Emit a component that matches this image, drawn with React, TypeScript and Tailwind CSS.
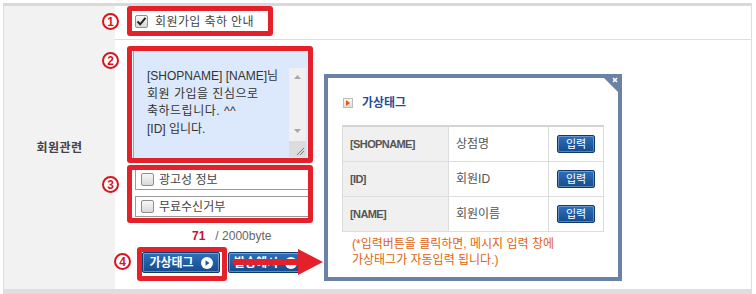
import React from "react";

function CheckBox({ checked }: { checked?: boolean }) {
  return (
    <span className="relative inline-flex w-[13px] h-[13px] shrink-0 items-center justify-center rounded-[2px] border border-[#8f8f8f] bg-gradient-to-b from-[#f7f7f7] to-[#d9d9d9]">
      {checked && (
        <svg width="11" height="11" viewBox="0 0 11 11">
          <path d="M1.5 5.5 L4.2 8.3 L9.5 1.8" fill="none" stroke="#222" strokeWidth="2" />
        </svg>
      )}
    </span>
  );
}

function Circled({ n }: { n: string }) {
  return (
    <span className="flex w-[17px] h-[17px] items-center justify-center rounded-full border-[2px] border-[#d8141c] text-[12px] font-bold leading-none text-[#d8141c] bg-white">
      {n}
    </span>
  );
}

function PlayDot() {
  return (
    <svg width="12" height="12" viewBox="0 0 12 12">
      <circle cx="6" cy="6" r="6" fill="#ffffff" />
      <path d="M4.5 3.2 L8.5 6 L4.5 8.8 Z" fill="#1b5597" />
    </svg>
  );
}

function BlueButton({ label, w }: { label: string; w: string }) {
  return (
    <div
      className={`${w} h-[21px] flex items-center justify-center gap-[7px] rounded-[2px] border border-[#0c3a72] bg-gradient-to-b from-[#2d70ba] to-[#164b8e] shadow-[inset_0_0_0_1px_rgba(255,255,255,0.35)] text-white font-bold text-[12px]`}
    >
      <span>{label}</span>
      <PlayDot />
    </div>
  );
}

function InputBtn() {
  return (
    <div className="w-[38px] h-[18px] flex items-center justify-center rounded-[2px] border border-[#0c3a72] bg-gradient-to-b from-[#2d70ba] to-[#164b8e] shadow-[inset_0_0_0_1px_rgba(255,255,255,0.3)] text-white text-[11px]">
      입력
    </div>
  );
}

export default function App() {
  const rows = [
    ["[SHOPNAME]", "상점명"],
    ["[ID]", "회원ID"],
    ["[NAME]", "회원이름"],
  ];
  return (
    <div className="relative w-[756px] h-[294px] overflow-hidden bg-white pt-[3px] pl-[3px] font-['Liberation_Sans','Noto_Sans_CJK_KR',sans-serif] text-[12px] text-[#555]">
      {/* frame */}
      <div className="w-[749px] h-[291px] flex border-t-[3px] border-b-[5px] border-l border-r border-t-[#d9d9d9] border-b-[#dedede] border-l-[#dddddd] border-r-[#dddddd]">
        <div className="w-[111px] bg-[#f2f2f2] flex items-center justify-center font-bold text-[#444] tracking-[0.5px]">
          회원관련
        </div>
        <div className="flex-1 flex flex-col">
          <div className="h-[34px] border-b border-[#dddddd] flex items-center pl-[20px] gap-[7px] pb-[2px]">
            <CheckBox checked />
            <span className="text-[#444] tracking-[0.4px]">회원가입 축하 안내</span>
          </div>
          <div className="flex-1 flex flex-col pl-[18px] pt-[10px]">
            {/* textarea */}
            <div className="w-[175px] h-[109px] flex bg-[#dce9fc] border-l border-[#a5a5a5] pt-[18px] pl-[13px] pr-[2px] pb-[2px]">
              <div className="flex-1 leading-[17.5px] text-[#333] whitespace-nowrap">
                <div>[SHOPNAME] [NAME]님</div>
                <div className="tracking-[0.5px]">회원 가입을 진심으로</div>
                <div className="tracking-[0.5px]">축하드립니다. ^^</div>
                <div>[ID] 입니다.</div>
              </div>
              <div className="w-[17px] flex flex-col bg-[#f0f0f0]">
                <div className="h-[17px] flex items-center justify-center">
                  <svg width="7" height="4" viewBox="0 0 7 4">
                    <path d="M0 4 L3.5 0 L7 4 Z" fill="#a8a8a8" />
                  </svg>
                </div>
                <div className="flex-1" />
                <div className="h-[17px] flex items-center justify-center">
                  <svg width="7" height="4" viewBox="0 0 7 4">
                    <path d="M0 0 L3.5 4 L7 0 Z" fill="#a8a8a8" />
                  </svg>
                </div>
                <div className="h-[16px] mt-[2px] bg-[#dcdcdc] flex items-end justify-end pr-[1px] pb-[1px]">
                  <svg width="9" height="9" viewBox="0 0 9 9">
                    <path d="M1 8 L8 1 M4 8 L8 4" stroke="#777" strokeWidth="1" />
                  </svg>
                </div>
              </div>
            </div>
            {/* checkbox boxes */}
            <div className="ml-[2px] mt-[10px] w-[177px] h-[21px] border border-[#9a9a9a] flex items-center pl-[5px] gap-[5px]">
              <CheckBox />
              <span className="text-[#444]">광고성 정보</span>
            </div>
            <div className="ml-[2px] mt-[6px] w-[177px] h-[21px] border border-[#9a9a9a] flex items-center pl-[5px] gap-[5px]">
              <CheckBox />
              <span className="text-[#444]">무료수신거부</span>
            </div>
            {/* count */}
            <div className="mt-[11px] h-[16px] flex items-center ml-[59px]">
              <span className="font-bold text-[#c4122f]">71</span>
              <span className="ml-[10px] text-[#666]">/ 2000byte</span>
            </div>
            {/* buttons */}
            <div className="mt-[8px] ml-[9px] flex gap-[8px]">
              <BlueButton label="가상태그" w="w-[78px]" />
              <BlueButton label="발송예시" w="w-[75px]" />
            </div>
          </div>
        </div>
      </div>

      {/* popup layer */}
      <div className="absolute left-[324px] top-[74px] w-[298px] h-[207px] border-[4px] border-[#6a82a5] bg-white pl-[14px] pt-[18px]">
        <div className="h-[14px] flex items-center gap-[9px] pl-[1px]">
          <span className="w-[10px] h-[10px] flex items-center justify-center border border-[#bdbdbd] bg-gradient-to-b from-[#fafafa] to-[#dcdcdc]">
            <svg width="4" height="6" viewBox="0 0 4 6">
              <path d="M0 0 L4 3 L0 6 Z" fill="#e05a14" />
            </svg>
          </span>
          <span className="font-bold text-[#1f4f9c] text-[12px]">가상태그</span>
        </div>
        <div className="mt-[15px] w-[262px] border-t-[2px] border-[#d3d3d3] border-l border-r border-l-[#dddddd] border-r-[#dddddd]">
          {rows.map(([tag, name]) => (
            <div key={tag} className="h-[35px] grid grid-cols-[106px_100px_1fr] border-b border-[#dddddd]">
              <div className="bg-[#f0f0f0] border-r border-[#dddddd] flex items-center pl-[7px] font-bold text-[11px] tracking-[-0.6px] text-[#555]">
                {tag}
              </div>
              <div className="border-r border-[#dddddd] flex items-center pl-[7px] text-[#555]">{name}</div>
              <div className="flex items-center justify-center">
                <InputBtn />
              </div>
            </div>
          ))}
        </div>
        <div className="mt-[4px] ml-[10px] leading-[16px] text-[#e0620f]">
          <div>(*입력버튼을 클릭하면, 메시지 입력 창에</div>
          <div>가상태그가 자동입력 됩니다.)</div>
        </div>
        <svg className="absolute -top-[4px] -right-[4px]" width="22" height="22" viewBox="0 0 22 22">
          <path d="M0 0 L22 0 L22 22 Z" fill="#6a82a5" />
          <path d="M13 4 L17 8 M17 4 L13 8" stroke="#fff" strokeWidth="1.6" />
        </svg>
      </div>

      {/* annotations: red boxes */}
      <div className="absolute left-[127px] top-[6px] w-[146px] h-[30px] border-[5px] border-[#e4202a] rounded-[3px]" />
      <div className="absolute left-[127px] top-[46px] w-[186px] h-[117px] border-[5px] border-[#e4202a] rounded-[3px]" />
      <div className="absolute left-[127px] top-[165px] w-[186px] h-[58px] border-[5px] border-[#e4202a] rounded-[3px]" />
      <div className="absolute left-[137px] top-[247px] w-[90px] h-[34px] border-[5px] border-[#e4202a] rounded-[3px]" />

      {/* circled numbers */}
      <div className="absolute left-[102px] top-[13px]"><Circled n="1" /></div>
      <div className="absolute left-[102px] top-[52px]"><Circled n="2" /></div>
      <div className="absolute left-[102px] top-[176px]"><Circled n="3" /></div>
      <div className="absolute left-[114px] top-[253px]"><Circled n="4" /></div>

      {/* arrow */}
      <svg className="absolute left-[230px] top-[247px]" width="95" height="30" viewBox="0 0 95 30">
        <path d="M4 12 L70 12 L70 18 L4 18 Q1 15 4 12 Z" fill="#e4202a" />
        <path d="M68 2 L93 15 L68 28 Z" fill="#e4202a" />
      </svg>
    </div>
  );
}
